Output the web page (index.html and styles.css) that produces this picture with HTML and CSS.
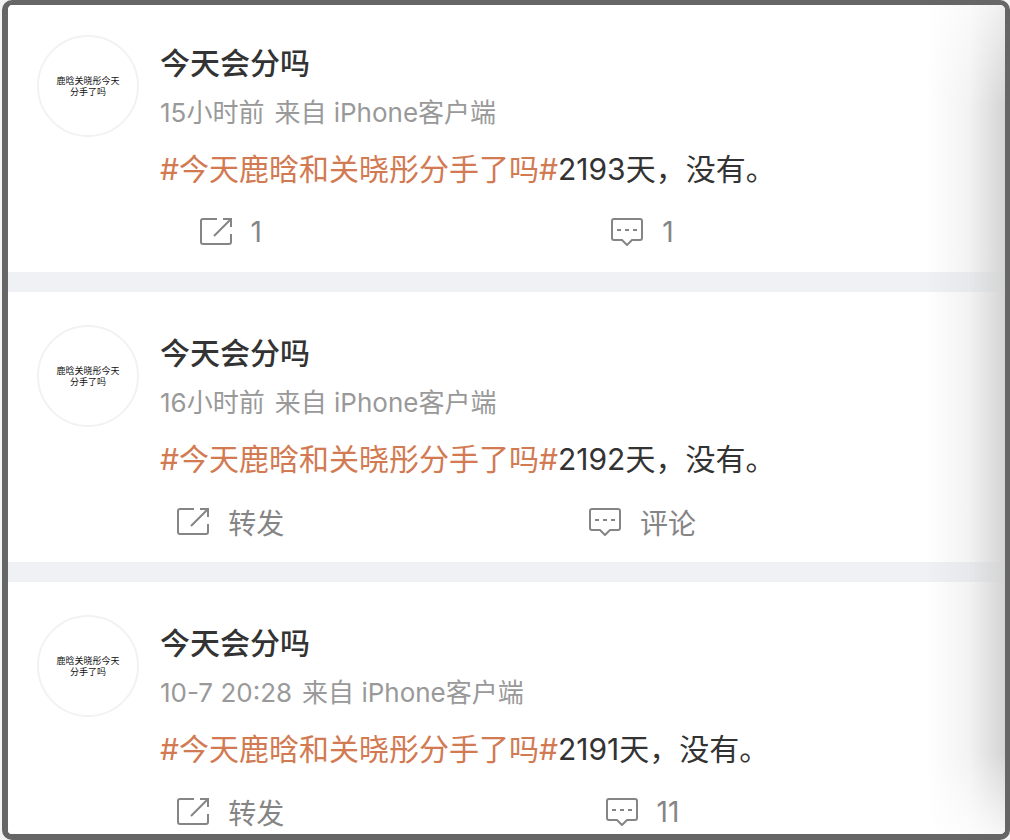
FILE: index.html
```html
<!DOCTYPE html>
<html lang="zh-CN">
<head>
  <meta charset="UTF-8">
  <meta name="viewport" content="width=device-width, initial-scale=1.0">
  <title>今天会分吗</title>
  <link rel="stylesheet" href="styles.css">
</head>

<body>

<!-- Icônes partagées -->
<svg class="sprite" width="0" height="0" aria-hidden="true">
  <symbol id="icon-share" viewBox="0 0 32 28">
    <path d="M17 1H3Q1 1 1 3V24Q1 26 3 26H29Q31 26 31 24V16M23 1H31V9M31 1L14 18"/>
  </symbol>
  <symbol id="icon-comment" viewBox="0 0 32 28">
    <path d="M3 1H29Q31 1 31 3V20Q31 22 29 22H21L16 27L11 22H3Q1 22 1 20V3Q1 1 3 1ZM6 12H10M14 12H18M22 12H26"/>
  </symbol>
</svg>

<main class="feed">

  <article class="post">
    <div class="avatar">鹿晗关晓彤今天<br>分手了吗</div>
    <div class="content">
      <h2>今天会分吗</h2>
      <p class="meta"><span>15小时前</span><span>来自 iPhone客户端</span></p>
      <p class="text"><a href="#">#今天鹿晗和关晓彤分手了吗#</a>2193天，没有。</p>
    </div>
    <div class="actions">
      <button type="button" aria-label="转发 1"><svg><use href="#icon-share"/></svg><span>1</span></button>
      <button type="button" aria-label="评论 1"><svg><use href="#icon-comment"/></svg><span>1</span></button>
    </div>
  </article>

  <article class="post">
    <div class="avatar">鹿晗关晓彤今天<br>分手了吗</div>
    <div class="content">
      <h2>今天会分吗</h2>
      <p class="meta"><span>16小时前</span><span>来自 iPhone客户端</span></p>
      <p class="text"><a href="#">#今天鹿晗和关晓彤分手了吗#</a>2192天，没有。</p>
    </div>
    <div class="actions">
      <button type="button"><svg><use href="#icon-share"/></svg><span>转发</span></button>
      <button type="button"><svg><use href="#icon-comment"/></svg><span>评论</span></button>
    </div>
  </article>

  <article class="post">
    <div class="avatar">鹿晗关晓彤今天<br>分手了吗</div>
    <div class="content">
      <h2>今天会分吗</h2>
      <p class="meta"><span>10-7 20:28</span><span>来自 iPhone客户端</span></p>
      <p class="text"><a href="#">#今天鹿晗和关晓彤分手了吗#</a>2191天，没有。</p>
    </div>
    <div class="actions">
      <button type="button"><svg><use href="#icon-share"/></svg><span>转发</span></button>
      <button type="button" aria-label="评论 11"><svg><use href="#icon-comment"/></svg><span>11</span></button>
    </div>
  </article>

</main>

</body>
</html>
```
FILE: styles.css
```css
* {
  box-sizing: border-box;
}
body {
  margin: 0;
  padding-left: 2px;
  background-color: #f4f4f4;
  font-family: Inter, "Noto Sans CJK SC", sans-serif;
  color: #333;
}
.sprite {
  display: block;
}
.feed {
  position: relative;
  height: 100vh;
  overflow: hidden;
  border: 6px solid #666;
  border-top-width: 5px;
  border-right-width: 5px;
  border-radius: 10px;
  background-color: #eff1f5;
}
/* shade on the right side */
.feed::after {
  content: "";
  position: absolute;
  top: 0;
  right: 0;
  bottom: 0;
  width: 80px;
  pointer-events: none;
  background: linear-gradient(to right, rgba(210, 210, 210, 0), rgba(210, 210, 210, 0.28) 55%, rgba(210, 210, 210, 0.95));
  -webkit-mask-image: linear-gradient(rgba(0, 0, 0, 0.4), #000 100px, #000 calc(100% - 80px), rgba(0, 0, 0, 0.2));
  mask-image: linear-gradient(rgba(0, 0, 0, 0.4), #000 100px, #000 calc(100% - 80px), rgba(0, 0, 0, 0.2));
}
.post {
  display: grid;
  grid-template-columns: 102px 1fr;
  column-gap: 21px;
  margin-bottom: 20px;
  padding: 33px 0 9px 29px;
  background-color: #fff;
}
.post:first-child {
  padding-top: 30px;
}
.avatar {
  display: flex;
  align-items: center;
  justify-content: center;
  height: 102px;
  border: 2px solid #f2f2f2;
  border-radius: 50%;
  font-size: 9px;
  line-height: 11px;
  text-align: center;
  color: #111;
}
.content {
  padding-top: 3px;
}
h2 {
  margin: 0;
  font-size: 30px;
  font-weight: 500;
  line-height: 50px;
}
p {
  margin: 0;
}
.meta {
  display: flex;
  gap: 10px;
  font-size: 26px;
  line-height: 50px;
  color: #999;
}
.text {
  font-size: 30px;
  line-height: 62px;
}
.text a {
  color: #d27a52;
  text-decoration: none;
}
.actions {
  grid-column: 1 / -1;
  display: grid;
  grid-template-columns: 42% 42%;
  margin-left: -12px;
}
.actions button {
  display: flex;
  align-items: center;
  justify-content: center;
  gap: 19px;
  height: 63px;
  padding: 0;
  border: 0;
  background: none;
  font: inherit;
  font-size: 28px;
  color: #858585;
}
.actions svg {
  width: 32px;
  height: 28px;
  fill: none;
  stroke: #858585;
  stroke-width: 2;
}
```
